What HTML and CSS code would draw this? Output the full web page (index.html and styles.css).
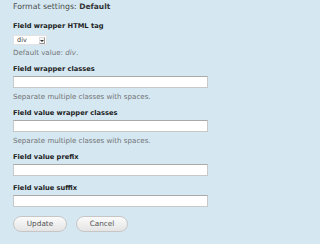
FILE: index.html
```html
<!DOCTYPE html>
<html>
<head>
<meta charset="utf-8">
<link rel="stylesheet" href="styles.css">
</head>
<body>
<div class="panel">
  <div class="format">Format settings: <strong>Default</strong></div>
  <div class="item item-first">
    <div class="label">Field wrapper HTML tag</div>
    <div class="select">
      <span class="select-text">div</span>
      <span class="select-arrow"><span class="tri"></span></span>
    </div>
    <div class="desc desc-tight">Default value: <em>div</em>.</div>
  </div>
  <div class="item">
    <div class="label">Field wrapper classes</div>
    <div class="input"></div>
    <div class="desc">Separate multiple classes with spaces.</div>
  </div>
  <div class="item">
    <div class="label">Field value wrapper classes</div>
    <div class="input"></div>
    <div class="desc">Separate multiple classes with spaces.</div>
  </div>
  <div class="item">
    <div class="label">Field value prefix</div>
    <div class="input"></div>
  </div>
  <div class="item item-suffix">
    <div class="label">Field value suffix</div>
    <div class="input"></div>
  </div>
  <div class="actions">
    <span class="button btn-update">Update</span>
    <span class="button btn-cancel">Cancel</span>
  </div>
</div>
</body>
</html>
```

FILE: styles.css
```css
html, body {
  margin: 0;
  padding: 0;
  background: #d5e8f2;
}
body {
  font-family: "DejaVu Sans", "Liberation Sans", sans-serif;
  font-size: 7px;
  color: #333;
}
.panel {
  width: 220px;
  height: 244px;
  overflow: hidden;
  box-sizing: border-box;
  padding: 2px 12px 0 13px;
}
.format {
  font-size: 7.8px;
  line-height: 10px;
  height: 10px;
  color: #4a4a4a;
}
.format strong {
  font-weight: bold;
  font-size: 7.5px;
  color: #333;
}
.item {
  margin-top: 6px;
}
.item-first {
  margin-top: 9px;
}
.item-suffix {
  margin-top: 7px;
}
.label {
  font-weight: bold;
  font-size: 6.7px;
  line-height: 10px;
  height: 10px;
  color: #222;
}
.select {
  margin-top: 4px;
  width: 34px;
  height: 10px;
  box-sizing: border-box;
  background: #fff;
  border: 1px solid #e2e2e2;
  display: flex;
  align-items: center;
  justify-content: space-between;
}
.select-text {
  font-size: 6.5px;
  line-height: 8px;
  padding-left: 3px;
  color: #444;
}
.select-arrow {
  width: 6px;
  height: 7px;
  margin-right: 1px;
  box-sizing: border-box;
  border: 1px solid #999;
  border-top-color: #ddd;
  border-left-color: #ddd;
  background: #f4f4f4;
  display: flex;
  align-items: flex-end;
  justify-content: center;
  padding-bottom: 1px;
}
.tri {
  width: 0;
  height: 0;
  border-left: 2px solid transparent;
  border-right: 2px solid transparent;
  border-top: 2px solid #333;
}
.desc {
  margin-top: 4px;
  line-height: 10px;
  height: 10px;
  font-size: 7.1px;
  color: #727272;
}
.desc-tight {
  margin-top: 3px;
}
.input {
  margin-top: 2px;
  width: 195px;
  height: 12px;
  box-sizing: border-box;
  background: #fff;
  border: 1px solid #c8c8c8;
  border-top-color: #a9a9a9;
}
.actions {
  margin-top: 9px;
  display: flex;
  gap: 9px;
}
.button {
  height: 16px;
  box-sizing: border-box;
  border: 1px solid #c6c6c6;
  border-radius: 8px;
  background: linear-gradient(#fbfbfb, #e4e4e4);
  color: #555;
  font-size: 7.3px;
  line-height: 14px;
  text-align: center;
}
.btn-update {
  width: 54px;
}
.btn-cancel {
  width: 52px;
}
```
